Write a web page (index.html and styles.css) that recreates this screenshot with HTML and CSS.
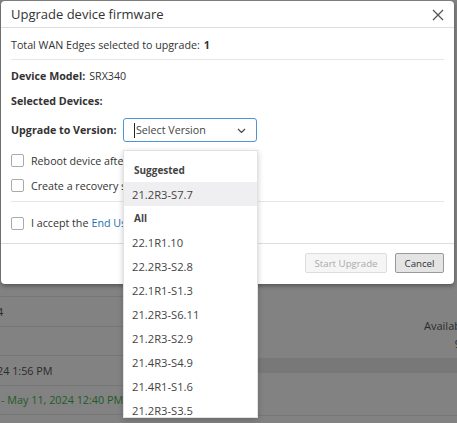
FILE: index.html
```html
<!DOCTYPE html>
<html lang="en">
<head>
    <meta charset="UTF-8">
    <meta name="viewport" content="width=device-width, initial-scale=1.0">
    <title>Upgrade device firmware</title>
    <link rel="stylesheet" href="styles.css">
</head>
<body>
    <!-- page behind the dialog, dimmed by the backdrop -->
    <div class="page">
        <div class="rows">
            <div class="row"></div>
            <div class="row"><span class="cut">4</span></div>
            <div class="row"></div>
            <div class="row"><span class="cut">24 1:56 PM</span></div>
            <div class="row"><span class="green">- May 11, 2024 12:40 PM</span></div>
        </div>
        <div class="side">
            <div class="avail">Availab</div>
            <div class="avail-num">9</div>
            <div class="band"></div>
        </div>
    </div>

    <div class="modal">
        <div class="modal-header">
            <span class="modal-title">Upgrade device firmware</span>
            <span class="close">
                <svg width="12" height="12" viewBox="0 0 12 12">
                    <path d="M1 1 L11 11 M11 1 L1 11" stroke="#555" stroke-width="1.3" fill="none"/>
                </svg>
            </span>
        </div>

        <div class="modal-body">
            <div class="line total">Total WAN Edges selected to upgrade: <b>1</b></div>
            <hr>
            <div class="line first"><b>Device Model:</b> SRX340</div>
            <div class="line"><b>Selected Devices:</b></div>

            <div class="version-row">
                <b class="label">Upgrade to Version:</b>
                <div class="select">
                    <div class="select-box">
                        <span class="caret"></span>Select Version
                        <svg class="chevron" width="9" height="6" viewBox="0 0 9 6">
                            <path d="M1 1 L4.5 4.5 L8 1" stroke="#444" stroke-width="1.2" fill="none"/>
                        </svg>
                    </div>
                    <div class="menu">
                        <div class="group">Suggested</div>
                        <div class="option active">21.2R3-S7.7</div>
                        <div class="group">All</div>
                        <div class="option">22.1R1.10</div>
                        <div class="option">22.2R3-S2.8</div>
                        <div class="option">22.1R1-S1.3</div>
                        <div class="option">21.2R3-S6.11</div>
                        <div class="option">21.2R3-S2.9</div>
                        <div class="option">21.4R3-S4.9</div>
                        <div class="option">21.4R1-S1.6</div>
                        <div class="option">21.2R3-S3.5</div>
                    </div>
                </div>
            </div>

            <label class="check"><span class="box"></span>Reboot device after upgrade</label>
            <label class="check"><span class="box"></span>Create a recovery snapshot</label>
            <hr class="sep">
            <label class="check eula"><span class="box"></span>I accept the <a href="#">End User License Agreement</a></label>
        </div>

        <div class="modal-footer">
            <button class="btn" disabled>Start Upgrade</button>
            <button class="btn cancel">Cancel</button>
        </div>
    </div>
</body>
</html>
```

FILE: styles.css
```css
body {
    margin: 0;
    background: #828282;
    font-family: "Open Sans", "Liberation Sans", sans-serif;
    font-size: 10.7px;
    color: #333;
    overflow: hidden;
    height: 423px;
}

/* dimmed page */
.page {
    display: flex;
    padding-top: 267.5px;
}
.rows {
    width: 258px;
    flex: none;
}
.row {
    height: 28.5px;
    border-bottom: 1px solid #767676;
    display: flex;
    align-items: center;
    color: #2b2b2b;
    font-size: 10.8px;
    white-space: nowrap;
}
.row .cut {
    margin-left: -3px;
}
.row .green {
    color: #1d5c28;
    margin-left: 1px;
}
.side {
    flex: 1;
    text-align: right;
    color: #2b2b2b;
    font-size: 11px;
    white-space: nowrap;
    border-bottom: 1px solid #767676;
    height: 147px;
}
.avail {
    margin-top: 50px;
    margin-right: -4px;
    line-height: 15px;
}
.avail-num {
    margin-top: 3px;
    margin-right: -4px;
    line-height: 15px;
}
.band {
    margin-top: 7px;
    height: 15px;
    background: #787878;
}

/* dialog */
.modal {
    position: absolute;
    left: 1px;
    top: 1px;
    width: 453px;
    height: 283px;
    background: #fff;
    border-radius: 4px;
    box-shadow: 0 2px 4px rgba(0, 0, 0, 0.35);
    display: flex;
    flex-direction: column;
}
.modal-header {
    height: 26px;
    flex: none;
    border-bottom: 1px solid #ddd;
    display: flex;
    align-items: center;
    justify-content: space-between;
    padding: 0 10px;
}
.modal-title {
    font-size: 13px;
    color: #333;
}
.close {
    display: flex;
    margin-top: 2px;
}
.modal-body {
    flex: 1;
    padding: 0 10px;
}
.line {
    height: 25px;
    display: flex;
    align-items: center;
    gap: 4px;
}
.line.first {
    margin-top: 3px;
}
.total {
    height: 31px;
    padding-top: 3px;
    box-sizing: border-box;
}
hr {
    border: none;
    border-top: 1px solid #e6e6e6;
    margin: 0;
}
hr.sep {
    margin-top: 3px;
}
b {
    font-weight: 700;
}
.version-row {
    display: flex;
    align-items: center;
    height: 34px;
    margin-bottom: 1px;
}
.label {
    width: 112px;
    flex: none;
}
.select {
    position: relative;
}
.select-box {
    width: 134px;
    height: 24px;
    border: 1px solid #4f94d4;
    border-radius: 3px;
    display: flex;
    align-items: center;
    padding-left: 10px;
    box-sizing: border-box;
    color: #444;
}
.caret {
    width: 1px;
    height: 15px;
    background: #222;
    margin-right: 1px;
}
.chevron {
    position: absolute;
    right: 11px;
    top: 10px;
}
.menu {
    position: absolute;
    left: 0;
    top: 32px;
    width: 135px;
    height: 268px;
    overflow: hidden;
    background: #fff;
    border: 1px solid #e2e2e2;
    box-shadow: 0 2px 6px rgba(0, 0, 0, 0.2);
    padding-top: 7px;
    box-sizing: border-box;
    z-index: 2;
}
.group {
    height: 24px;
    display: flex;
    align-items: center;
    padding-left: 10px;
    font-weight: 700;
    font-size: 10px;
    color: #444;
}
.option {
    height: 24px;
    display: flex;
    align-items: center;
    padding-left: 8px;
    font-size: 11.2px;
    color: #444;
}
.option.active {
    background: #efeff1;
}
.check {
    display: flex;
    align-items: center;
    height: 25px;
    gap: 7px;
    white-space: nowrap;
}
.box {
    width: 11px;
    height: 11px;
    border: 1px solid #aaa;
    border-radius: 2px;
    flex: none;
}
.eula {
    height: 39px;
    padding-top: 3px;
    box-sizing: border-box;
}
.check a {
    color: #1c6fb5;
    text-decoration: none;
    margin-left: -4px;
}
.modal-footer {
    height: 41px;
    flex: none;
    border-top: 1px solid #ddd;
    display: flex;
    align-items: center;
    justify-content: flex-end;
    gap: 8px;
    padding: 0 10px 2px 0;
    box-sizing: border-box;
}
.btn {
    font-family: inherit;
    font-size: 9.7px;
    height: 20px;
    padding: 0 8.5px;
    border-radius: 2px;
    border: 1px solid #999;
    background: #e4e4e4;
    color: #333;
}
.btn:disabled {
    background: #f5f5f5;
    border-color: #ddd;
    color: #aaa;
}
```
